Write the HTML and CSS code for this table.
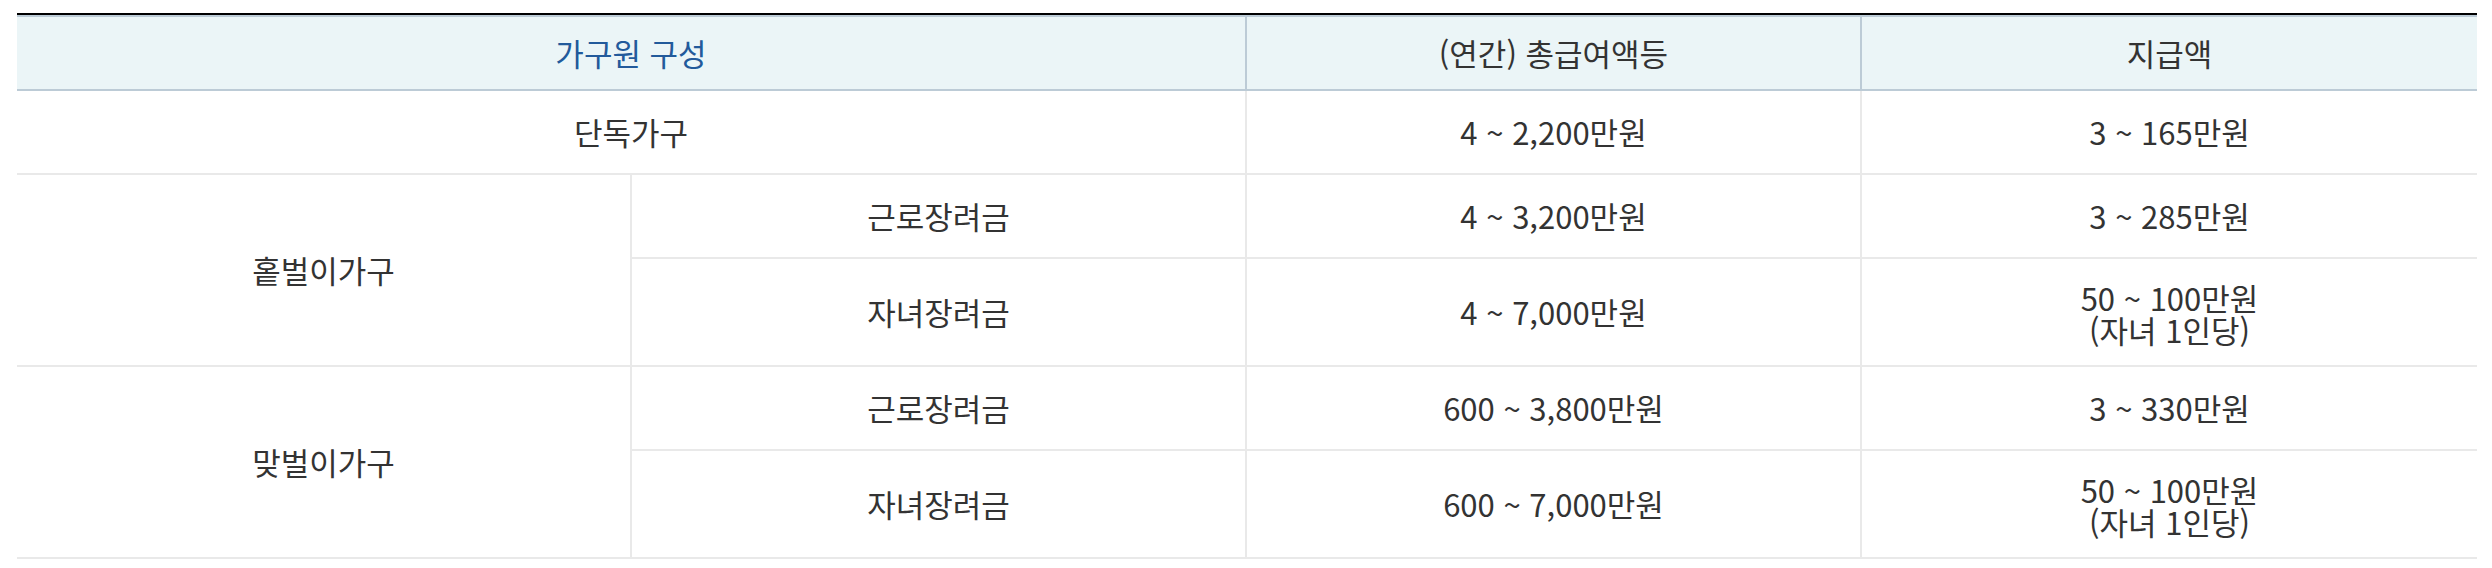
FILE: index.html
```html
<!DOCTYPE html>
<html lang="ko">
<head>
<meta charset="utf-8">
<title>근로장려금 지급액</title>
<link rel="stylesheet" href="styles.css">
</head>
<body>
<div class="wrap">
  <table class="tbl">
    <colgroup><col><col><col><col></colgroup>
    <thead>
      <tr>
        <th colspan="2" class="th-blue">가구원 구성</th>
        <th>(연간) 총급여액등</th>
        <th class="last">지급액</th>
      </tr>
    </thead>
    <tbody>
      <tr>
        <td colspan="2">단독가구</td>
        <td>4 ~ 2,200만원</td>
        <td class="last">3 ~ 165만원</td>
      </tr>
      <tr>
        <td rowspan="2">홑벌이가구</td>
        <td>근로장려금</td>
        <td>4 ~ 3,200만원</td>
        <td class="last">3 ~ 285만원</td>
      </tr>
      <tr>
        <td>자녀장려금</td>
        <td>4 ~ 7,000만원</td>
        <td class="last two"><span class="ln">50 ~ 100만원</span><span class="ln">(자녀 1인당)</span></td>
      </tr>
      <tr>
        <td rowspan="2">맞벌이가구</td>
        <td>근로장려금</td>
        <td>600 ~ 3,800만원</td>
        <td class="last">3 ~ 330만원</td>
      </tr>
      <tr>
        <td>자녀장려금</td>
        <td>600 ~ 7,000만원</td>
        <td class="last two"><span class="ln">50 ~ 100만원</span><span class="ln">(자녀 1인당)</span></td>
      </tr>
    </tbody>
  </table>
</div>
</body>
</html>
```

FILE: styles.css
```css
html, body {
  margin: 0;
  padding: 0;
  background: #ffffff;
}

.wrap {
  margin: 13px 15px 0 17px;
  border-top: 2px solid #000000;
}

.tbl {
  width: 100%;
  table-layout: fixed;
  border-collapse: separate;
  border-spacing: 0;
  font-family: "Noto Sans CJK KR", "Noto Sans", sans-serif;
  font-size: 31px;
  line-height: 32px;
  color: #333333;
  text-align: center;
}

.tbl th {
  font-weight: 400;
  background: #ebf5f7;
  border-top: 2px solid #bccbd6;
  border-bottom: 2px solid #bccbd6;
  border-right: 2px solid #bccbd6;
  padding: 20px 0 20px;
}

.tbl th.th-blue {
  color: #225a9b;
}

.tbl td {
  border-bottom: 2px solid #e9e9e9;
  border-right: 2px solid #e9e9e9;
  padding: 25px 0 25px;
  vertical-align: middle;
}

.tbl td.two {
  padding: 23px 0 19px;
}

.tbl .ln {
  display: block;
  height: 32px;
}

.tbl .last {
  border-right: none;
}
```
